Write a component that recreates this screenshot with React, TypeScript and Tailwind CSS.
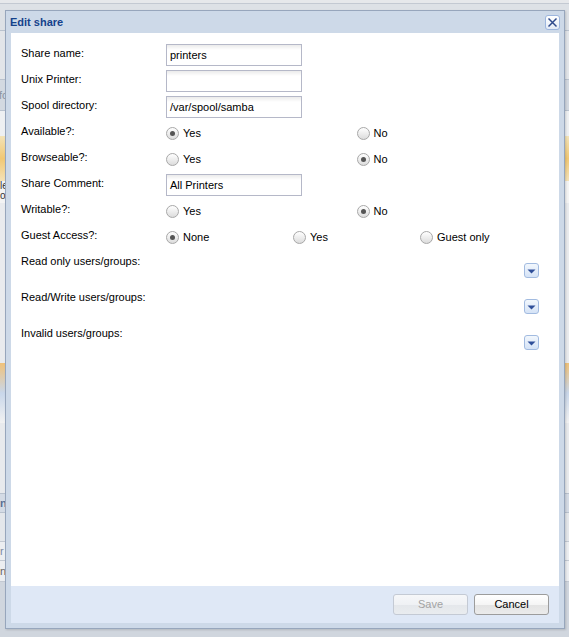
import React from "react";

type RadioOpt = { label: string; checked?: boolean };

function Radio({ label, checked }: RadioOpt) {
  return (
    <div className="flex items-center">
      <span className="flex h-[13px] w-[13px] items-center justify-center rounded-full border border-[#a8a8a8] bg-[linear-gradient(to_bottom,#ffffff,#dcdcdc)]">
        {checked && <span className="h-[5px] w-[5px] rounded-full bg-[#555555]" />}
      </span>
      <span className="ml-[4px] text-[11px] leading-[14px] text-black">{label}</span>
    </div>
  );
}

function TextRow({ label, value }: { label: string; value: string }) {
  return (
    <div className="mb-[4px] flex h-[22px] items-start">
      <div className="w-[145px] pt-[2px] text-[11px] leading-[14px] text-black">{label}</div>
      <div className="flex h-[22px] w-[136px] items-center border border-[#b5b8c8] bg-[linear-gradient(to_bottom,#ebebeb,#ffffff_5px)] pl-[3px] text-[11px] text-black">
        {value}
      </div>
    </div>
  );
}

function RadioRow({ label, options }: { label: string; options: RadioOpt[] }) {
  return (
    <div className="mb-[4px] flex h-[22px] items-start">
      <div className="w-[145px] pt-[2px] text-[11px] leading-[14px] text-black">{label}</div>
      <div
        className={
          options.length === 3
            ? "grid h-[22px] w-[381px] grid-cols-3 items-center"
            : "grid h-[22px] w-[381px] grid-cols-2 items-center"
        }
      >
        {options.map((o) => (
          <Radio key={o.label} {...o} />
        ))}
      </div>
    </div>
  );
}

function TriggerButton() {
  return (
    <div className="flex h-[15px] w-[15px] items-start justify-center rounded-[3px] border border-[#a2bbe0] bg-[linear-gradient(to_bottom,#f2f7fd,#d5e3f6)]">
      <svg width="9" height="6" viewBox="0 0 9 6" className="mt-[5px]">
        <polygon points="0.5,0.5 8.5,0.5 4.5,4.5" fill="#2f4f99" />
      </svg>
    </div>
  );
}

function MultiRow({ label }: { label: string }) {
  return (
    <div className="flex h-[36px] items-start">
      <div className="w-[145px] pt-[2px] text-[11px] leading-[14px] text-black">{label}</div>
      <div className="flex w-[381px] justify-end pr-[8px] pt-[11px]">
        <TriggerButton />
      </div>
    </div>
  );
}

function Backdrop() {
  return (
    <div className="flex h-full flex-col">
      <div className="h-[3px] bg-[#e6e8eb]" />
      <div className="h-[1px] bg-[#c3c9d2]" />
      <div className="h-[26px] bg-[#dde1e6]" />
      <div className="h-[1px] bg-[#b9c2ce]" />
      <div className="h-[48px] bg-[#e2e5e9]" />
      <div className="h-[1px] bg-[#b9c2ce]" />
      <div className="flex h-[30px] items-center bg-[#d3d9e1] text-[11px] text-[#8a93a0]">
        <span className="-ml-[1px]">fc</span>
      </div>
      <div className="h-[1px] bg-[#b9c2ce]" />
      <div className="h-[25px] bg-[#eef0f2]" />
      <div className="h-[45px] bg-[linear-gradient(to_bottom,#f3e3b8,#f1c874,#f4e2b8)]" />
      <div className="flex h-[22px] flex-col bg-[#f4f4f4] text-[10px] leading-[10px] text-[#333]">
        <span>le</span>
        <span>or</span>
      </div>
      <div className="h-[160px] bg-[#e9ebee]" />
      <div className="h-[60px] bg-[linear-gradient(to_bottom,#f0c27a,#c9d7ea,#f2f2f2)]" />
      <div className="h-[70px] bg-[#e8eaed]" />
      <div className="h-[1px] bg-[#b9c2ce]" />
      <div className="flex h-[18px] items-center bg-[#d4dbe5] text-[11px] font-bold text-[#5a6f94]">n:</div>
      <div className="h-[1px] bg-[#b9c2ce]" />
      <div className="h-[28px] bg-[#e4e7eb]" />
      <div className="h-[1px] bg-[#c3c9d2]" />
      <div className="flex h-[18px] items-center bg-[#eceef1] text-[11px] text-[#7d8aa0]">r</div>
      <div className="h-[1px] bg-[#c3c9d2]" />
      <div className="flex h-[20px] items-center bg-[#eceef1] text-[11px] text-[#666]">n</div>
      <div className="h-[1px] bg-[#c3c9d2]" />
      <div className="flex-1 bg-[#d0d6de]" />
    </div>
  );
}

export default function App() {
  return (
    <div className="relative h-[637px] w-[569px] overflow-hidden bg-[#d6dbe2] font-['Liberation_Sans',Arial,sans-serif]">
      <Backdrop />

      {/* Fenêtre Edit share */}
      <div className="absolute left-[5px] top-[10px] flex h-[619px] w-[560px] flex-col border border-[#97a6bc] bg-[#cdd9e8] shadow-[1px_1px_2px_rgba(0,0,0,0.15)]">
        <div className="flex h-[22px] items-center justify-between pl-[4px] pr-[4px]">
          <span className="text-[11px] font-bold text-[#15428b]">Edit share</span>
          <div className="flex h-[15px] w-[15px] items-center justify-center rounded-[3px] border border-[#9db6de] bg-[linear-gradient(to_bottom,#ffffff,#e3ebf7)]">
            <svg width="11" height="11" viewBox="0 0 11 11">
              <path d="M1.5 1.5 L9.5 9.5 M9.5 1.5 L1.5 9.5" stroke="#2e4a8c" strokeWidth="1.5" />
            </svg>
          </div>
        </div>

        <div className="mx-[5px] h-[553px] bg-white pl-[10px] pr-[12px] pt-[11px]">
          <TextRow label="Share name:" value="printers" />
          <TextRow label="Unix Printer:" value="" />
          <TextRow label="Spool directory:" value="/var/spool/samba" />
          <RadioRow label="Available?:" options={[{ label: "Yes", checked: true }, { label: "No" }]} />
          <RadioRow label="Browseable?:" options={[{ label: "Yes" }, { label: "No", checked: true }]} />
          <TextRow label="Share Comment:" value="All Printers" />
          <RadioRow label="Writable?:" options={[{ label: "Yes" }, { label: "No", checked: true }]} />
          <RadioRow
            label="Guest Access?:"
            options={[{ label: "None", checked: true }, { label: "Yes" }, { label: "Guest only" }]}
          />
          <MultiRow label="Read only users/groups:" />
          <MultiRow label="Read/Write users/groups:" />
          <MultiRow label="Invalid users/groups:" />
        </div>

        <div className="mx-[5px] flex h-[37px] items-start justify-end gap-[6px] bg-[#dfe8f6] pr-[10px] pt-[8px]">
          <button className="h-[21px] w-[75px] rounded-[3px] border border-[#c4cad4] bg-[linear-gradient(to_bottom,#f6f7f9_0%,#eff1f4_50%,#e4e7eb_51%,#e9ecef_100%)] text-[11px] text-[#a3a3a3]">
            Save
          </button>
          <button className="h-[21px] w-[75px] rounded-[3px] border border-[#9c9c9c] bg-[linear-gradient(to_bottom,#ffffff_0%,#f5f5f5_50%,#e3e3e3_51%,#ebebeb_100%)] text-[11px] text-black">
            Cancel
          </button>
        </div>
      </div>
    </div>
  );
}
